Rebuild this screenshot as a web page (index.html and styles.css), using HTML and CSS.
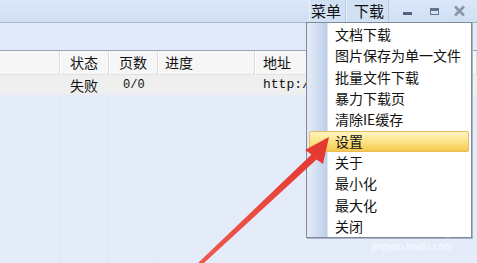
FILE: index.html
```html
<!DOCTYPE html>
<html lang="zh-cn">
<head>
  <meta charset="UTF-8" />
  <title>下载器</title>
  <link rel="stylesheet" href="styles.css">
</head>
<body>
  <div class="janela">
    <div class="titulo">
      <span class="titulo-btn">菜单</span>
      <span class="titulo-btn">下载</span>
      <div class="controles">
        <svg class="ctl" width="26" height="22" viewBox="0 0 26 22"><rect x="8" y="12" width="9" height="3" fill="#52627e"/></svg>
        <svg class="ctl" width="26" height="22" viewBox="0 0 26 22"><rect x="9.5" y="8.5" width="8" height="6" fill="none" stroke="#63738e"/><rect x="9" y="8" width="9" height="3" fill="#63738e"/></svg>
        <svg class="ctl" width="26" height="22" viewBox="0 0 26 22"><path d="M8 6.5 L17 15.5 M17 6.5 L8 15.5" stroke="#8795ab" stroke-width="2.6"/></svg>
      </div>
    </div>

    <div class="ferramentas"></div>

    <div class="linha cabecalho">
      <span></span>
      <span>状态</span>
      <span>页数</span>
      <span>进度</span>
      <span>地址</span>
    </div>
    <div class="linha dados">
      <span></span>
      <span>失败</span>
      <span class="num">0/0</span>
      <span></span>
      <span class="url">http://</span>
    </div>

    <div class="corpo">
      <div class="divisor"></div>
      <div class="divisor"></div>
      <div class="divisor"></div>
    </div>
  </div>

  <ul class="menu">
    <li>文档下载</li>
    <li>图片保存为单一文件</li>
    <li>批量文件下载</li>
    <li>暴力下载页</li>
    <li>清除IE缓存</li>
    <li class="ativo">设置</li>
    <li>关于</li>
    <li>最小化</li>
    <li>最大化</li>
    <li>关闭</li>
  </ul>

  <div class="marca">
    <div class="marca-logo">Bai<span class="pata">&#10047;</span>du 经验</div>
    <div class="marca-url">jingyan.baidu.com</div>
  </div>

  <svg class="seta" width="477" height="263" viewBox="0 0 477 263">
    <defs>
      <linearGradient id="verm" x1="0" y1="1" x2="1" y2="0">
        <stop offset="0" stop-color="#ef5a4e"/>
        <stop offset="1" stop-color="#e3362f"/>
      </linearGradient>
    </defs>
    <polygon points="329,137 305,150 311.5,154.5 198,263 204,263 316.5,159.5 323,164" fill="url(#verm)"/>
  </svg>
</body>
</html>
```

FILE: styles.css
```css
* {
  margin: 0;
  padding: 0;
  box-sizing: border-box;
}

body {
  width: 477px;
  height: 263px;
  overflow: hidden;
  position: relative;
  background: #e4ecfa;
  font-family: "Noto Sans CJK SC", "Noto Sans", sans-serif;
  font-size: 14px;
  color: #111;
}

.janela {
  display: flex;
  flex-direction: column;
  height: 263px;
}

/* barra de titulo */
.titulo {
  height: 22px;
  display: flex;
  justify-content: flex-end;
  align-items: center;
  background: linear-gradient(#dbe7f8, #cfdff4);
  padding-right: 4px;
}

.titulo-btn {
  height: 22px;
  line-height: 21px;
  font-size: 15px;
  white-space: nowrap;
  border-left: 1px solid #e8f0fb;
  border-right: 1px solid #b7c8e0;
  background: #d2e0f4;
}

.titulo-btn:first-child {
  width: 37px;
  padding-left: 1px;
}

.titulo-btn + .titulo-btn {
  width: 43px;
  padding-left: 7px;
}

.controles {
  display: flex;
  margin-left: 6px;
}

.ctl {
  display: block;
}

.ferramentas {
  height: 29px;
  border-top: 1px solid #a9b6c8;
  border-bottom: 1px solid #9ea8b4;
  background: #e0eaf9;
}

/* tabela */
.linha {
  display: grid;
  grid-template-columns: 60px 49px 49px 97px 1fr;
  align-items: center;
}

.linha span {
  padding-left: 10px;
  white-space: nowrap;
  overflow: hidden;
}

.cabecalho {
  height: 24px;
  background: #f6f6f6;
  border-bottom: 1px solid #e2e2e2;
}

.cabecalho span {
  height: 24px;
  line-height: 23px;
  border-right: 1px solid #dcdcdc;
  box-shadow: 1px 0 0 #fff;
}

.cabecalho span:nth-child(4),
.dados span:nth-child(4) {
  padding-left: 7px;
}

.cabecalho span:nth-child(5),
.dados span:nth-child(5) {
  padding-left: 8px;
}

.dados {
  height: 20px;
  background: #efefef;
  line-height: 20px;
}

.num {
  font-family: "Liberation Mono", monospace;
  font-size: 12px;
  padding-left: 14px !important;
}

.url {
  font-family: "Liberation Mono", monospace;
  font-size: 13px;
}

.corpo {
  flex: 1;
  display: grid;
  grid-template-columns: 60px 49px 49px 1fr;
}

.divisor {
  border-right: 1px solid #dfe7f4;
}

/* menu suspenso */
.menu {
  position: absolute;
  left: 306px;
  top: 22px;
  width: 166px;
  list-style: none;
  background: #fff linear-gradient(to right, #e0e9f6 2px, #d2dff2 10px, #bccfea 20px, #fff 21px) no-repeat;
  background-size: 22px 100%;
  border: 1px solid #7f8a99;
  box-shadow: 1px 1px 0 #a9b4c4;
  padding: 1px 0 0;
}

.menu li {
  height: 21.33px;
  line-height: 21px;
  padding-left: 26px;
  margin: 0 2px;
}

.menu .ativo {
  background: linear-gradient(#fff4c2, #fde58c 45%, #f6c94d);
  border: 1px solid #e8bd5c;
  border-radius: 2px;
  padding-left: 25px;
  line-height: 19px;
}

/* marca d'agua */
.marca {
  position: absolute;
  left: 364px;
  top: 221px;
  color: rgba(255, 255, 255, 0.75);
  text-align: center;
}

.marca-logo {
  font-family: "Liberation Sans", sans-serif;
  font-size: 16px;
  font-weight: bold;
  line-height: 18px;
}

.pata {
  font-size: 13px;
  margin: 0 1px;
}

.marca-url {
  font-family: "Liberation Sans", sans-serif;
  font-size: 10px;
  line-height: 14px;
}

.seta {
  position: absolute;
  left: 0;
  top: 0;
}
```
